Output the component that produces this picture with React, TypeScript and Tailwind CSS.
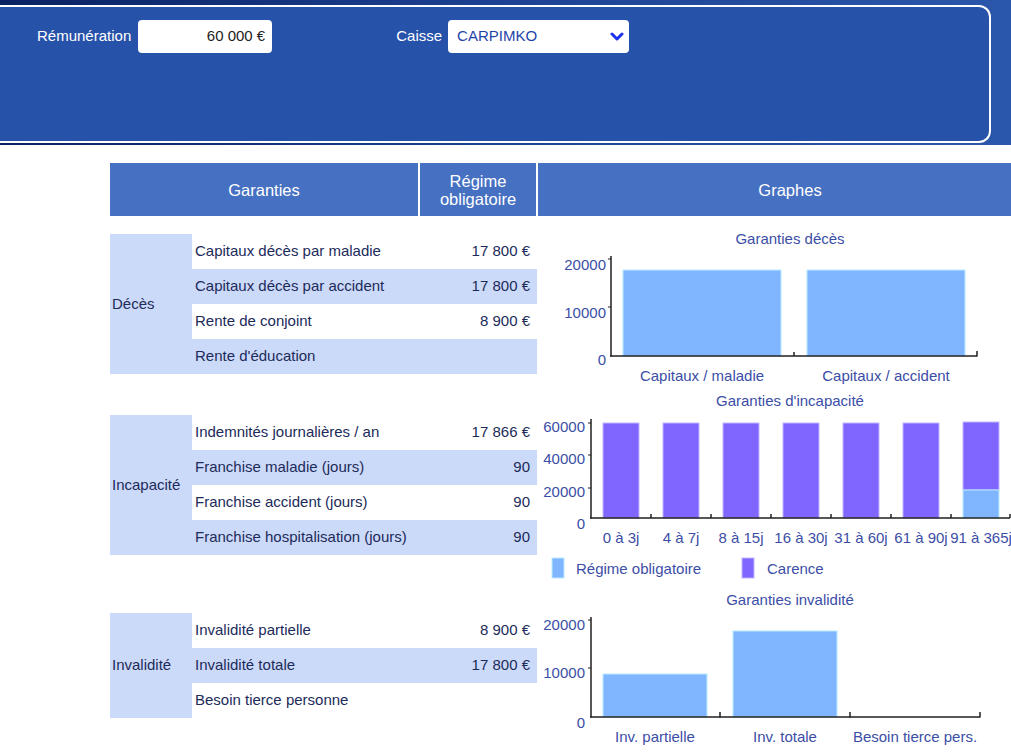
const FONT = { fontFamily: '"Liberation Sans", Arial, sans-serif' }

const AXIS = '#1f1f1f'
const LABEL = '#3b4ea6'
const BLUE = '#80b6ff'
const BLUE_STROKE = '#b8eaff'
const PURPLE = '#8066ff'
const PURPLE_STROKE = '#c4b4ff'

type Row = { label: string; value?: string }

function Section({ title, rows, top, height, chart }: { title: string; rows: Row[]; top: number; height: number; chart: React.ReactNode }) {
  return (
    <div className="flex" style={{ height }}>
      <div className="w-[427px] shrink-0" style={{ paddingTop: top }}>
        <div className="flex">
          <div className="w-[82px] shrink-0 bg-[#ccdaf9] flex items-center pl-[2px]">{title}</div>
          <div className="w-[345px] shrink-0">
            {rows.map((r, i) => (
              <div
                key={r.label}
                className={`h-[35px] flex items-center justify-between pl-[3px] pr-[7px] ${i % 2 === 1 ? 'bg-[#ccdaf9]' : 'bg-white'}`}
              >
                <span>{r.label}</span>
                <span>{r.value}</span>
              </div>
            ))}
          </div>
        </div>
      </div>
      <div className="w-[505px] shrink-0">{chart}</div>
    </div>
  )
}

function DecesChart() {
  return (
    <svg width="505" height="176" viewBox="537 216 505 176" style={FONT} fontSize="15">
      <text x="790" y="244" textAnchor="middle" fill={LABEL}>Garanties décès</text>
      <rect x="623" y="270" width="158" height="86" fill={BLUE} stroke={BLUE_STROKE} />
      <rect x="807" y="270" width="158" height="86" fill={BLUE} stroke={BLUE_STROKE} />
      <line x1="611" y1="256" x2="611" y2="356.5" stroke={AXIS} strokeWidth="1.5" />
      <line x1="610" y1="356" x2="977" y2="356" stroke={AXIS} strokeWidth="1.5" />
      <line x1="608" y1="307" x2="611" y2="307" stroke={AXIS} strokeWidth="1" />
      <line x1="608" y1="259" x2="611" y2="259" stroke={AXIS} strokeWidth="1" />
      <line x1="794" y1="352" x2="794" y2="356" stroke={AXIS} strokeWidth="1.5" />
      <line x1="977" y1="351" x2="977" y2="356.5" stroke={AXIS} strokeWidth="1.5" />
      <g fill={LABEL} textAnchor="end">
        <text x="606" y="270">20000</text>
        <text x="606" y="318">10000</text>
        <text x="606" y="365">0</text>
      </g>
      <g fill={LABEL} textAnchor="middle">
        <text x="702" y="381">Capitaux / maladie</text>
        <text x="886" y="381">Capitaux / accident</text>
      </g>
    </svg>
  )
}

const periods = ['0 à 3j', '4 à 7j', '8 à 15j', '16 à 30j', '31 à 60j', '61 à 90j', '91 à 365j']

function IncapaciteChart() {
  return (
    <svg width="505" height="200" viewBox="537 392 505 200" style={FONT} fontSize="15">
      <text x="790" y="406" textAnchor="middle" fill={LABEL}>Garanties d'incapacité</text>
      {periods.map((p, i) =>
        i < 6 ? (
          <rect key={p} x={603 + 60 * i} y="423" width="36" height="95" fill={PURPLE} stroke={PURPLE_STROKE} />
        ) : (
          <g key={p}>
            <rect x={603 + 60 * i} y="422" width="36" height="68" fill={PURPLE} stroke={PURPLE_STROKE} />
            <rect x={603 + 60 * i} y="490" width="36" height="28" fill={BLUE} stroke={BLUE_STROKE} />
          </g>
        )
      )}
      <line x1="591" y1="419" x2="591" y2="518.5" stroke={AXIS} strokeWidth="1.5" />
      <line x1="590" y1="518" x2="1010" y2="518" stroke={AXIS} strokeWidth="1.5" />
      {[651, 711, 771, 831, 891, 951, 1010].map(x => (
        <line key={x} x1={x} y1="514" x2={x} y2="518" stroke={AXIS} strokeWidth="1.5" />
      ))}
      {[427, 459, 492].map(y => (
        <line key={y} x1="588" y1={y - 4} x2="591" y2={y - 4} stroke={AXIS} strokeWidth="1" />
      ))}
      <g fill={LABEL} textAnchor="end">
        <text x="585" y="432">60000</text>
        <text x="585" y="464">40000</text>
        <text x="585" y="497">20000</text>
        <text x="585" y="529">0</text>
      </g>
      <g fill={LABEL} textAnchor="middle">
        {periods.map((p, i) => (
          <text key={p} x={621 + 60 * i} y="543">{p}</text>
        ))}
      </g>
      <rect x="552" y="558" width="12" height="20" fill={BLUE} stroke={BLUE_STROKE} />
      <text x="576" y="574" fill={LABEL}>Régime obligatoire</text>
      <rect x="742" y="558" width="12" height="20" fill={PURPLE} stroke={PURPLE_STROKE} />
      <text x="767" y="574" fill={LABEL}>Carence</text>
    </svg>
  )
}

function InvaliditeChart() {
  return (
    <svg width="505" height="170" viewBox="537 592 505 170" style={FONT} fontSize="15">
      <text x="790" y="605" textAnchor="middle" fill={LABEL}>Garanties invalidité</text>
      <rect x="603" y="674" width="104" height="43" fill={BLUE} stroke={BLUE_STROKE} />
      <rect x="733" y="631" width="104" height="86" fill={BLUE} stroke={BLUE_STROKE} />
      <line x1="591" y1="617" x2="591" y2="717.5" stroke={AXIS} strokeWidth="1.5" />
      <line x1="590" y1="717" x2="980" y2="717" stroke={AXIS} strokeWidth="1.5" />
      {[720, 850, 980].map(x => (
        <line key={x} x1={x} y1="712" x2={x} y2="717.5" stroke={AXIS} strokeWidth="1.5" />
      ))}
      <line x1="588" y1="668" x2="591" y2="668" stroke={AXIS} strokeWidth="1" />
      <line x1="588" y1="620" x2="591" y2="620" stroke={AXIS} strokeWidth="1" />
      <g fill={LABEL} textAnchor="end">
        <text x="585" y="630">20000</text>
        <text x="585" y="678">10000</text>
        <text x="585" y="728">0</text>
      </g>
      <g fill={LABEL} textAnchor="middle">
        <text x="655" y="742">Inv. partielle</text>
        <text x="785" y="742">Inv. totale</text>
        <text x="915" y="742">Besoin tierce pers.</text>
      </g>
    </svg>
  )
}

export default function App() {
  return (
    <div className="w-[1011px] h-[753px] overflow-hidden bg-white text-[15px]" style={FONT}>
      {/* bandeau de saisie */}
      <div className="h-[145px] pt-[5px] pr-[20px] bg-gradient-to-r from-[#0a2262] via-[#1d4294] to-[#2b57ab]">
        <div className="h-[138px] border-2 border-l-0 border-white rounded-r-[12px] bg-[#2652a9]">
          <div className="mt-[13px] h-[33px] flex items-center pl-[37px] text-white">
            <span>Rémunération</span>
            <div className="ml-[7px] w-[134px] h-[33px] bg-white rounded-[4px] flex items-center justify-end pr-[7px] text-[#222]">
              60 000 €
            </div>
            <span className="ml-[124px]">Caisse</span>
            <div className="ml-[6px] w-[181px] h-[33px] bg-white rounded-[4px] flex items-center justify-between pl-[9px] pr-[5px] text-[#1f45a8]">
              <span>CARPIMKO</span>
              <svg width="14" height="10" viewBox="0 0 14 10">
                <polyline points="2,2 7,7 12,2" fill="none" stroke="#1b33ee" strokeWidth="3" strokeLinecap="round" strokeLinejoin="round" />
              </svg>
            </div>
          </div>
        </div>
      </div>

      {/* tableau des garanties */}
      <div className="ml-[110px] mt-[18px] text-[#1c2b5a]">
        <div className="flex gap-[2px] h-[53px] text-white text-[16.5px] leading-[18px]">
          <div className="w-[308px] shrink-0 bg-[#4671c2] flex items-center justify-center">Garanties</div>
          <div className="w-[116px] shrink-0 bg-[#4671c2] flex items-center justify-center text-center">
            Régime
            <br />
            obligatoire
          </div>
          <div className="w-[504px] shrink-0 bg-[#4671c2] flex items-center justify-center">Graphes</div>
        </div>

        <Section
          title="Décès"
          top={18}
          height={176}
          rows={[
            { label: 'Capitaux décès par maladie', value: '17 800 €' },
            { label: 'Capitaux décès par accident', value: '17 800 €' },
            { label: 'Rente de conjoint', value: '8 900 €' },
            { label: "Rente d'éducation" },
          ]}
          chart={<DecesChart />}
        />
        <Section
          title="Incapacité"
          top={23}
          height={200}
          rows={[
            { label: 'Indemnités journalières / an', value: '17 866 €' },
            { label: 'Franchise maladie (jours)', value: '90' },
            { label: 'Franchise accident (jours)', value: '90' },
            { label: 'Franchise hospitalisation (jours)', value: '90' },
          ]}
          chart={<IncapaciteChart />}
        />
        <Section
          title="Invalidité"
          top={21}
          height={170}
          rows={[
            { label: 'Invalidité partielle', value: '8 900 €' },
            { label: 'Invalidité totale', value: '17 800 €' },
            { label: 'Besoin tierce personne' },
          ]}
          chart={<InvaliditeChart />}
        />
      </div>
    </div>
  )
}
